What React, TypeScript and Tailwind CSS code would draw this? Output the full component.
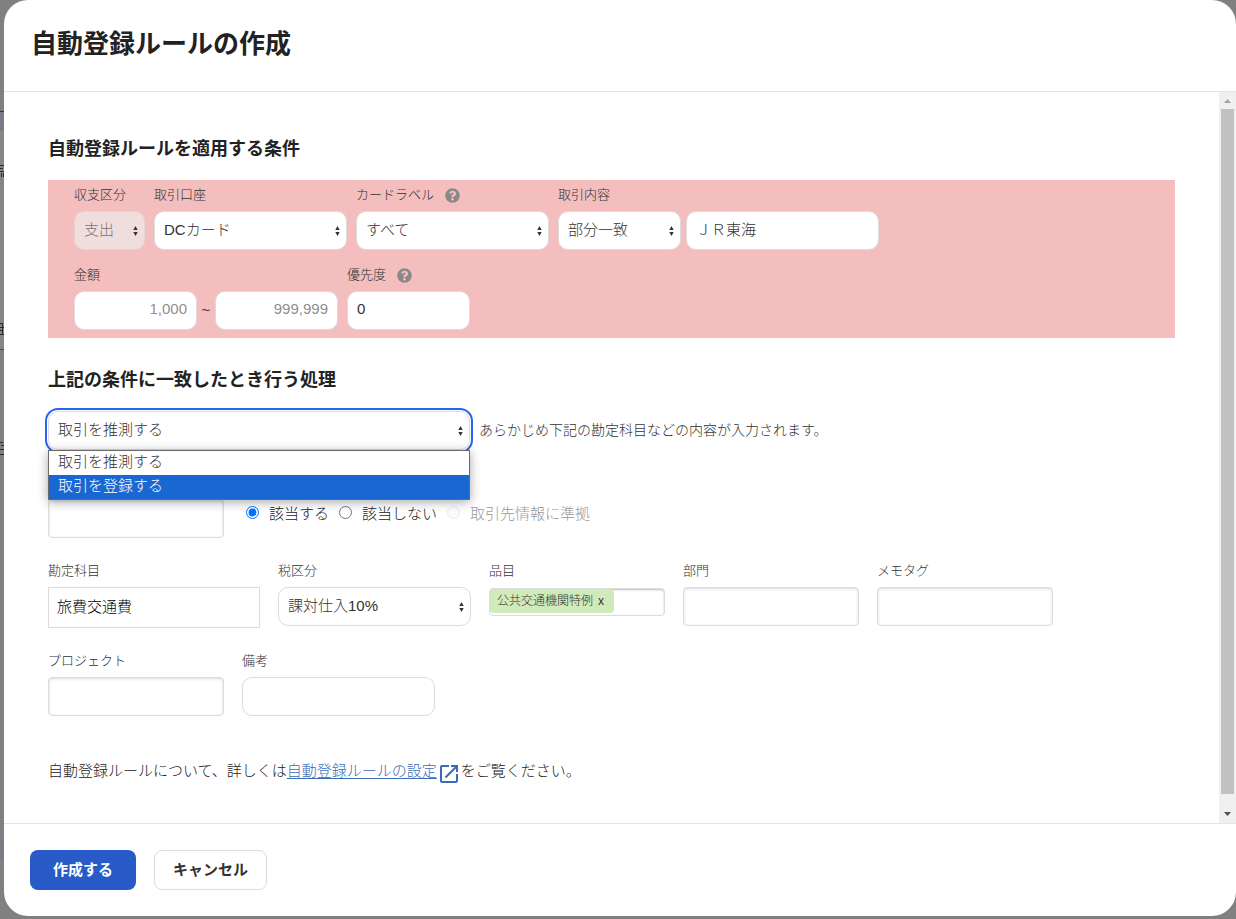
import React from 'react';
import clsx from 'clsx';
import { FaQuestionCircle } from 'react-icons/fa';
import { MdOpenInNew } from 'react-icons/md';

const controlBase = 'block w-full h-[39px] rounded-[10px] border px-[9px] text-[15px]';
const controlEnabled = 'border-[#dcdcdc] bg-white text-[#323232]';
const controlDisabled = 'border-[#e6d3d3] bg-[#f0dede] text-[#7d6e6e] opacity-100';
const comboBase =
  'block w-full h-[39px] rounded-[4px] border border-[#dfdcd5] bg-white px-2 text-[15px] shadow-[inset_0_1px_3px_rgba(0,0,0,0.15)]';

interface FieldProps {
  id: string;
  label: string;
  help?: boolean;
  className?: string;
  children: React.ReactNode;
}

const Field: React.FC<FieldProps> = ({ id, label, help, className, children }) => (
  <div className={className}>
    <div className="flex items-center gap-[11px] h-5 mb-1.5 whitespace-nowrap">
      <label htmlFor={id} className="text-[13px] leading-[22px] text-[#323232]">
        {label}
      </label>
      {help && <FaQuestionCircle className="w-[15px] h-[15px] text-[#8c8888]" />}
    </div>
    {children}
  </div>
);

interface SelectBoxProps {
  id: string;
  options: string[];
  disabled?: boolean;
  focused?: boolean;
  ariaLabel?: string;
}

const SelectBox: React.FC<SelectBoxProps> = ({ id, options, disabled, focused, ariaLabel }) => (
  <div className="relative">
    <select
      id={id}
      aria-label={ariaLabel}
      disabled={disabled}
      className={clsx(
        controlBase,
        'appearance-none',
        disabled ? controlDisabled : controlEnabled,
        focused && 'outline-2 outline-offset-1 outline-[#2864f0]'
      )}
    >
      {options.map((option) => (
        <option key={option}>{option}</option>
      ))}
    </select>
    <svg
      viewBox="0 0 5 10"
      className="absolute right-[7px] top-[15px] w-[5px] h-[10px] fill-[#323232] pointer-events-none"
    >
      <path d="M2.5 0 4.7 4H.3zM2.5 10 .3 6h4.4z" />
    </svg>
  </div>
);

const ConditionPanel: React.FC = () => (
  <div className="bg-[#f4bebe] pl-[26px] pr-2 pt-[5px] pb-2">
    <div className="flex flex-wrap gap-[9px]">
      <Field id="entry-side" label="収支区分" className="w-[71px]">
        <SelectBox id="entry-side" options={['支出']} disabled />
      </Field>
      <Field id="account" label="取引口座" className="w-[193px]">
        <SelectBox id="account" options={['DCカード']} />
      </Field>
      <Field id="card-label" label="カードラベル" help className="w-[193px]">
        <SelectBox id="card-label" options={['すべて']} />
      </Field>
      <Field id="match-type" label="取引内容">
        <div className="flex gap-[5px]">
          <div className="w-[123px]">
            <SelectBox id="match-type" options={['部分一致']} />
          </div>
          <div className="w-[193px]">
            <input
              aria-label="取引内容"
              defaultValue="ＪＲ東海"
              className={clsx(controlBase, controlEnabled, 'pb-1')}
            />
          </div>
        </div>
      </Field>
    </div>

    <div className="flex flex-wrap gap-[9px] mt-[15px]">
      <Field id="amount-min" label="金額">
        <div className="flex items-center">
          <div className="w-[123px]">
            <input
              id="amount-min"
              placeholder="1,000"
              className={clsx(controlBase, controlEnabled, 'pb-1 text-right placeholder:text-[#8f8f8f]')}
            />
          </div>
          <span className="w-[18px] text-center text-[15px] text-[#323232]">~</span>
          <div className="w-[123px]">
            <input
              aria-label="金額"
              placeholder="999,999"
              className={clsx(controlBase, controlEnabled, 'pb-1 text-right placeholder:text-[#8f8f8f]')}
            />
          </div>
        </div>
      </Field>
      <Field id="priority" label="優先度" help className="w-[123px]">
        <input id="priority" defaultValue="0" className={clsx(controlBase, controlEnabled, 'pb-1')} />
      </Field>
    </div>
  </div>
);

const ActionSelect: React.FC = () => (
  <div className="flex items-center gap-[9px] mt-[19px]">
    <div className="relative w-[422px]">
      <SelectBox
        id="action"
        ariaLabel="上記の条件に一致したとき行う処理"
        options={['取引を推測する', '取引を登録する']}
        focused
      />
      {/* Open option list */}
      <ul
        role="listbox"
        className="absolute z-10 top-[39px] inset-x-0 border border-[#6b6b6b] bg-white text-[15px] leading-[22px] text-[#323232] shadow-[0_2px_10px_rgba(0,0,0,0.35)]"
      >
        <li role="option" aria-selected="false" className="h-6 px-[9px]">
          取引を推測する
        </li>
        <li role="option" aria-selected="true" className="h-6 px-[9px] bg-[#1967d2] text-white">
          取引を登録する
        </li>
      </ul>
    </div>
    <p className="text-[14px] text-[#323232]">
      あらかじめ下記の勘定科目などの内容が入力されます。
    </p>
  </div>
);

const invoiceOptions = [
  { id: 'invoice-yes', label: '該当する', checked: true, disabled: false },
  { id: 'invoice-no', label: '該当しない', checked: false, disabled: false },
  { id: 'invoice-partner', label: '取引先情報に準拠', checked: false, disabled: true }
];

const InvoiceRadios: React.FC = () => (
  <div className="flex items-start gap-[10px] pt-[3px]">
    {invoiceOptions.map((option) => (
      <div key={option.id} className="flex items-center gap-[10px]">
        <input
          type="radio"
          id={option.id}
          name="invoice"
          defaultChecked={option.checked}
          disabled={option.disabled}
          className={clsx('w-[13px] h-[13px] mb-[3px]', option.disabled && 'opacity-40')}
        />
        <label
          htmlFor={option.id}
          className={clsx('text-[15px] leading-6', option.disabled ? 'text-[#999999]' : 'text-[#222222]')}
        >
          {option.label}
        </label>
      </div>
    ))}
  </div>
);

const EntryFields: React.FC = () => (
  <>
    <div className="flex gap-[22px] mt-[49px]">
      <div className="w-44">
        <input aria-label="取引先" className={comboBase} />
      </div>
      <InvoiceRadios />
    </div>

    <div className="flex flex-wrap gap-[18px] mt-[23px]">
      <Field id="account-item" label="勘定科目" className="w-[212px]">
        <input
          id="account-item"
          defaultValue="旅費交通費"
          className="block w-full h-[41px] border border-[#dfdcd5] bg-white px-2 pb-1 text-[15px] text-black"
        />
      </Field>
      <Field id="tax" label="税区分" className="w-[193px]">
        <SelectBox id="tax" options={['課対仕入10%']} />
      </Field>
      <Field id="item" label="品目" className="w-44">
        <div className="flex h-7 mt-[7px] rounded-[4px] border border-[#dcdcdc] bg-white shadow-[inset_0_1px_2px_rgba(0,0,0,0.25)]">
          <span className="flex shrink-0 items-center gap-[5px] h-6 rounded-[4px] bg-[#d0eab9] pl-[7px] pr-[10px] text-[12px] text-[#323232]">
            公共交通機関特例
            <button type="button">x</button>
          </span>
          <input id="item" className="min-w-0 flex-1 bg-transparent px-1 text-[12px] outline-none" />
        </div>
      </Field>
      <Field id="section" label="部門" className="w-44">
        <input id="section" className={comboBase} />
      </Field>
      <Field id="memo-tag" label="メモタグ" className="w-44">
        <input id="memo-tag" className={comboBase} />
      </Field>
    </div>

    <div className="flex flex-wrap gap-[18px] mt-[23px]">
      <Field id="project" label="プロジェクト" className="w-44">
        <input id="project" className={comboBase} />
      </Field>
      <Field id="note" label="備考" className="w-[193px]">
        <input id="note" className={clsx(controlBase, controlEnabled)} />
      </Field>
    </div>
  </>
);

const ScrollTrack: React.FC = () => (
  <div className="flex flex-col items-center w-[17px] shrink-0 bg-[#f0f0f0]" aria-hidden="true">
    <svg viewBox="0 0 17 17" className="w-[17px] h-[17px] fill-[#a3a3a3]">
      <path d="M8.5 7 12 11H5z" />
    </svg>
    <div className="w-[13px] flex-1 bg-[#c1c1c1]" />
    <svg viewBox="0 0 17 17" className="w-[17px] h-[17px] mt-3 fill-[#505050]">
      <path d="M5 6h7l-3.5 4z" />
    </svg>
  </div>
);

// Sliver of the dimmed page that stays visible beside the dialog
const PageEdge: React.FC = () => (
  <svg
    viewBox="0 0 4 919"
    preserveAspectRatio="xMinYMin slice"
    className="w-1 h-[919px] shrink-0"
    shapeRendering="crispEdges"
    aria-hidden="true"
  >
    <path d="M0 112h4v19H0zM0 840h4v19H0z" fill="#787b86" />
    <path d="M0 131h4v219H0z" fill="#868685" />
    <path d="M0 111h4v1H0z" fill="#1c3a7a" />
    <path d="M0 349h4v1H0z" fill="#4d4d4d" />
    <path
      d="M0 165h4v1H0zM0 168h3v1H0zM0 171h4v1H0zM1 173h1v4H1zM3 173h1v4H3zM0 323h3v1H0zM0 327h4v1H0zM0 330h3v1H0zM0 334h4v1H0zM2 323h1v11H2zM0 442h3v1H0zM1 445h3v1H1zM0 449h4v1H0zM0 454h4v1H0z"
      fill="#2b2b2b"
    />
  </svg>
);

export default function App() {
  return (
    <div className="flex min-h-screen bg-[#808080] font-['Liberation_Sans','Noto_Sans_CJK_JP',sans-serif] font-light text-[#222222]">
      <PageEdge />
      <div
        role="dialog"
        aria-labelledby="dialog-title"
        className="flex flex-1 flex-col mb-[3px] rounded-3xl bg-white overflow-hidden"
      >
        <header className="border-b border-[#e4e4e4] px-[27px] pt-[26px] pb-[29px]">
          <h1 id="dialog-title" className="text-[26px] leading-9 font-bold">
            自動登録ルールの作成
          </h1>
        </header>

        <div className="flex flex-1">
          <main className="flex-1 px-11 pt-[45px] pb-10">
            <h2 className="text-[18px] leading-6 font-bold mb-[19px]">自動登録ルールを適用する条件</h2>
            <ConditionPanel />

            <h2 className="text-[18px] leading-6 font-bold mt-[30px]">上記の条件に一致したとき行う処理</h2>
            <ActionSelect />
            <EntryFields />

            <p className="flex items-center h-6 mt-[43px] text-[15px] leading-6">
              自動登録ルールについて、詳しくは
              <a href="#" className="flex items-center text-[#3a6cb4] underline underline-offset-2">
                自動登録ルールの設定
                <MdOpenInNew className="w-6 h-6 mt-1.5" />
              </a>
              をご覧ください。
            </p>
          </main>
          <ScrollTrack />
        </div>

        <footer className="flex gap-[18px] border-t border-[#e4e4e4] px-[26px] py-[26px]">
          <button
            type="button"
            className="h-10 px-[23px] rounded-lg bg-[#285ac8] text-[15px] font-bold text-white"
          >
            作成する
          </button>
          <button
            type="button"
            className="h-10 px-[18px] rounded-lg border border-[#dcdcdc] bg-white text-[15px] font-bold text-[#323232]"
          >
            キャンセル
          </button>
        </footer>
      </div>
    </div>
  );
}
